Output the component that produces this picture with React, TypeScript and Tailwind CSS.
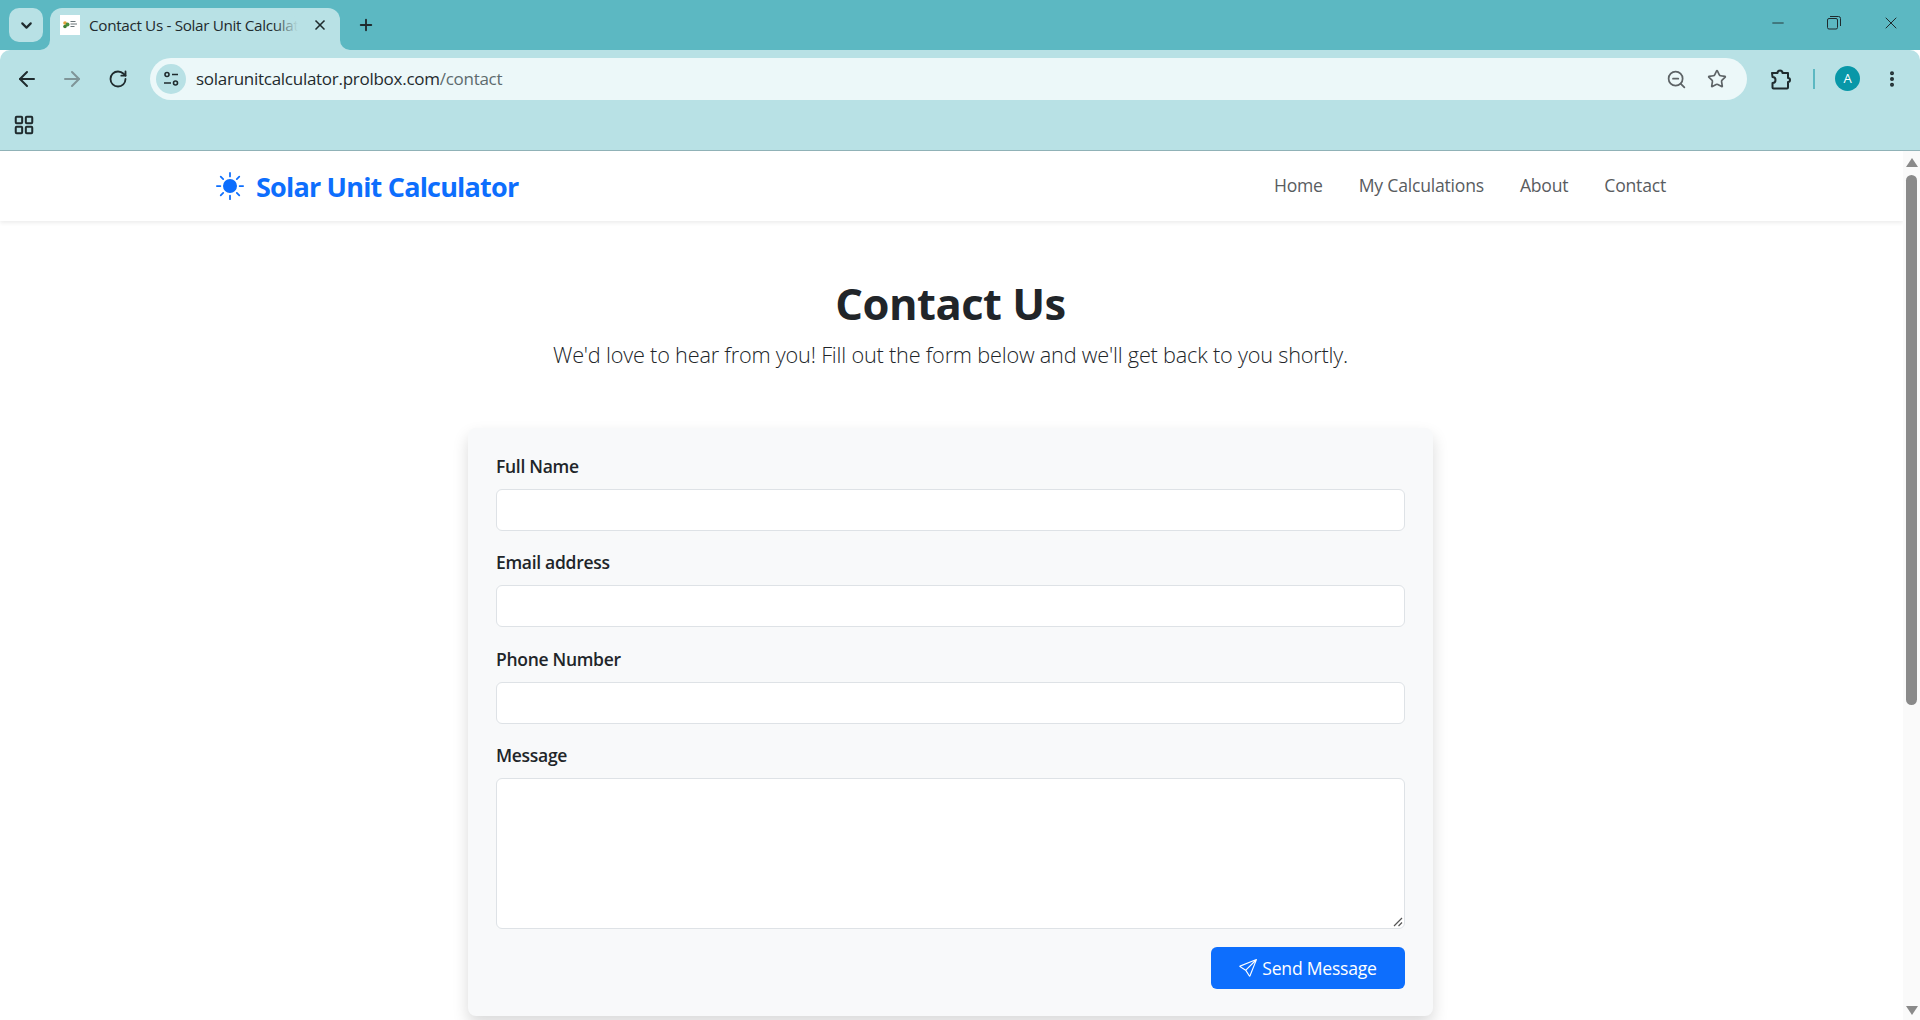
import React from "react";
import { ArrowLeft, ArrowRight, RotateCw, ChevronDown, X, Plus, LayoutGrid, ZoomOut, Star, EllipsisVertical, Minus } from "lucide-react";
import { BsSend, BsSunFill } from "react-icons/bs";

const ui = "font-['Open_Sans','Noto_Sans',sans-serif]";

function SiteIcon() {
  return (
    <svg width="20" height="20" viewBox="0 0 20 20" fill="none" stroke="#1f2b2e" strokeWidth="1.6">
      <circle cx="6" cy="5.5" r="2" />
      <path d="M11 5.5h6M3 14h7" />
      <circle cx="14.5" cy="14" r="2" />
    </svg>
  );
}

function Extension() {
  return (
    <svg width="22" height="22" viewBox="0 0 22 22" fill="none" stroke="#1f2b2e" strokeWidth="2" strokeLinejoin="round">
      <path d="M2 5h5.5a2.5 2.5 0 0 1 5 0H18v5a2 2 0 0 1 0 4v5.5a1 1 0 0 1-1 1H3.500a1 1 0 0 1-1-1V15a3 3 0 0 0 0-6z" />
    </svg>
  );
}

function RestoreIcon() {
  return (
    <svg width="14" height="14" viewBox="0 0 14 14" fill="none" stroke="#1f2b2e" strokeWidth="1">
      <rect x="0.500" y="2.500" width="10" height="10.500" rx="1.500" />
      <path d="M3 .5h8.500a2 2 0 0 1 2 2V10" />
    </svg>
  );
}

function Favicon() {
  return (
    <svg width="20" height="20" viewBox="0 0 20 20" className="shrink-0 bg-white">
      <circle cx="5" cy="8" r="1.800" fill="#e2a23b" />
      <circle cx="7.500" cy="9.500" r="2" fill="#4c8f3f" />
      <circle cx="5" cy="11.500" r="1.800" fill="#3f7f35" />
      <path d="M10.500 6.500h5M10.500 9h6.500M10.500 11.500h4" stroke="#6b7579" strokeWidth="1" />
    </svg>
  );
}

function Field({ label, tall }: { label: string; tall?: boolean }) {
  return (
    <div className="flex flex-col">
      <label className="mb-[10px] h-[26px] text-[17.5px] leading-[26px] font-semibold text-[#212529] tracking-[-0.3px]">{label}</label>
      {tall ? (
        <div className="relative h-[151px] rounded-[6px] border border-[#dee2e6] bg-white">
          <svg className="absolute bottom-[1px] right-[1px]" width="10" height="10" viewBox="0 0 10 10" stroke="#555" strokeWidth="1.200">
            <path d="M1 9l8-8M5.500 9L9 5.500" />
          </svg>
        </div>
      ) : (
        <div className="h-[42px] rounded-[6px] border border-[#dee2e6] bg-white" />
      )}
    </div>
  );
}

export default function App() {
  return (
    <div className={`flex h-[1020px] w-[1920px] flex-col overflow-hidden bg-white ${ui}`}>
      {/* tab strip */}
      <div className="flex h-[50px] items-end bg-[#5cb8c2]">
        <div className="mb-[8px] ml-[9px] flex h-[34px] w-[34px] items-center justify-center rounded-[10px] bg-[#b8e1e5]">
          <ChevronDown size={17} strokeWidth={3} color="#1f2b2e" />
        </div>
        <div className="relative ml-[7px] flex h-[42px] w-[290px] items-center rounded-t-[12px] bg-[#b8e1e5] pb-[8px] pl-[10px]">
          <svg className="absolute bottom-0 left-[-10px]" width="10" height="10" viewBox="0 0 10 10"><path d="M0 10a10 10 0 0 0 10-10v10z" fill="#b8e1e5" /></svg>
          <svg className="absolute bottom-0 right-[-10px]" width="10" height="10" viewBox="0 0 10 10"><path d="M10 10A10 10 0 0 1 0 0v10z" fill="#b8e1e5" /></svg>
          <Favicon />
          <span className="relative ml-[9px] w-[209px] overflow-hidden whitespace-nowrap text-[15.3px] tracking-[-0.35px] text-[#1f2b2e]">
            Contact Us - Solar Unit Calculat
            <span className="absolute inset-y-0 right-0 w-[24px] bg-gradient-to-r from-transparent to-[#b8e1e5]" />
          </span>
          <X size={16} strokeWidth={2.500} color="#1f2b2e" className="ml-[14px] shrink-0" />
        </div>
        <div className="mb-[8px] ml-[9px] flex h-[34px] w-[34px] items-center justify-center">
          <Plus size={18} strokeWidth={2.500} color="#1f2b2e" />
        </div>
        <div className="mb-[17px] ml-auto mr-[19px] flex items-center gap-[40px]">
          <Minus size={18} strokeWidth={1.200} color="#1f2b2e" />
          <RestoreIcon />
          <X size={20} strokeWidth={1.200} color="#1f2b2e" />
        </div>
      </div>

      {/* toolbar */}
      <div className="flex h-[101px] flex-col rounded-t-[10px] border-b border-[#92b4b9] bg-[#b8e1e5]">
        <div className="flex h-[50px] items-end">
          <div className="mb-[9px] ml-[15px] flex items-center">
            <ArrowLeft size={24} strokeWidth={2} color="#1f2b2e" />
            <ArrowRight size={24} strokeWidth={2} color="#7f9598" className="ml-[21px]" />
            <RotateCw size={20} strokeWidth={2.200} color="#1f2b2e" className="ml-[24px]" />
          </div>
          <div className="ml-[22px] flex h-[42px] w-[1597px] items-center rounded-full bg-[#ecf8f9] pl-[6px] pr-[20px]">
            <div className="flex h-[30px] w-[30px] items-center justify-center rounded-full bg-[#b8e1e5]"><SiteIcon /></div>
            <span className="ml-[10px] whitespace-nowrap text-[17px] tracking-[-0.27px] text-[#1f2b2e]">
              solarunitcalculator.prolbox.com<span className="text-[#5d6b6e]">/contact</span>
            </span>
            <ZoomOut size={21} strokeWidth={2} color="#5d6366" className="ml-auto" />
            <Star size={20} strokeWidth={2} color="#5d6366" className="ml-[20px]" />
          </div>
          <div className="mb-[10px] ml-[23px]"><Extension /></div>
          <div className="mb-[11px] ml-[21px] h-[20px] w-[2px] bg-[#5cb8c2]" />
          <div className="mb-[9px] ml-[20px] flex h-[25px] w-[25px] items-center justify-center rounded-full bg-[#0897a8] text-[13px] text-white">A</div>
          <EllipsisVertical size={20} strokeWidth={2.800} color="#1f2b2e" className="mb-[11px] ml-[22px]" />
        </div>
        <div className="flex flex-1 items-center pl-[13px]">
          <LayoutGrid size={22} strokeWidth={2.200} color="#1f2b2e" />
        </div>
      </div>

      {/* page */}
      <div className="flex min-h-0 flex-1">
        <div className="flex min-w-0 flex-1 flex-col">
          <nav className="flex h-[70px] shrink-0 items-center bg-white pl-[216px] pr-[237px] shadow-[0_2px_4px_rgba(0,0,0,0.075)]">
            <BsSunFill size={28} color="#0d6efd" />
            <span className="ml-[12px] pt-[2px] text-[27px] font-bold tracking-[-0.8px] text-[#0d6efd]">Solar Unit Calculator</span>
            <div className="mb-[1px] ml-auto flex items-center gap-[36px] text-[17.6px] tracking-[-0.22px] text-[#595c5f]">
              <span>Home</span>
              <span>My Calculations</span>
              <span>About</span>
              <span>Contact</span>
            </div>
          </nav>
          <main className="flex flex-col items-center pr-[2px] pt-[53px]">
            <h1 className="h-[60px] text-[43.5px] leading-[60px] font-bold tracking-[-0.5px] text-[#212529]">Contact Us</h1>
            <p className="mt-[6px] h-[30px] text-[21.7px] leading-[30px] font-light tracking-[-0.2px] text-[#212529]">We'd love to hear from you! Fill out the form below and we'll get back to you shortly.</p>
            <div className="mt-[58px] flex w-[965px] flex-col gap-[18.3px] rounded-[8px] bg-[#f8f9fa] px-[28px] pb-[27px] pt-[25px] shadow-[0_8px_16px_rgba(0,0,0,0.15)]">
              <Field label="Full Name" />
              <Field label="Email address" />
              <Field label="Phone Number" />
              <Field label="Message" tall />
              <div className="flex justify-end">
                <button className="flex h-[42px] w-[194px] items-center justify-center gap-[5px] rounded-[6px] bg-[#0d6efd] text-[17.6px] tracking-[-0.25px] text-white">
                  <BsSend size={18} />
                  Send Message
                </button>
              </div>
            </div>
          </main>
        </div>
        {/* scrollbar */}
        <div className="flex w-[17px] shrink-0 flex-col items-center bg-[#fafafa] pt-[7px]">
          <svg width="14" height="9" viewBox="0 0 14 9"><path d="M7 0l6 9H1z" fill="#8a8a8a" /></svg>
          <div className="mt-[8px] h-[530px] w-[11px] rounded-full bg-[#8a8a8a]" />
          <svg className="mb-[5px] mt-auto" width="14" height="9" viewBox="0 0 14 9"><path d="M7 9L1 0h12z" fill="#8a8a8a" /></svg>
        </div>
      </div>
    </div>
  );
}
